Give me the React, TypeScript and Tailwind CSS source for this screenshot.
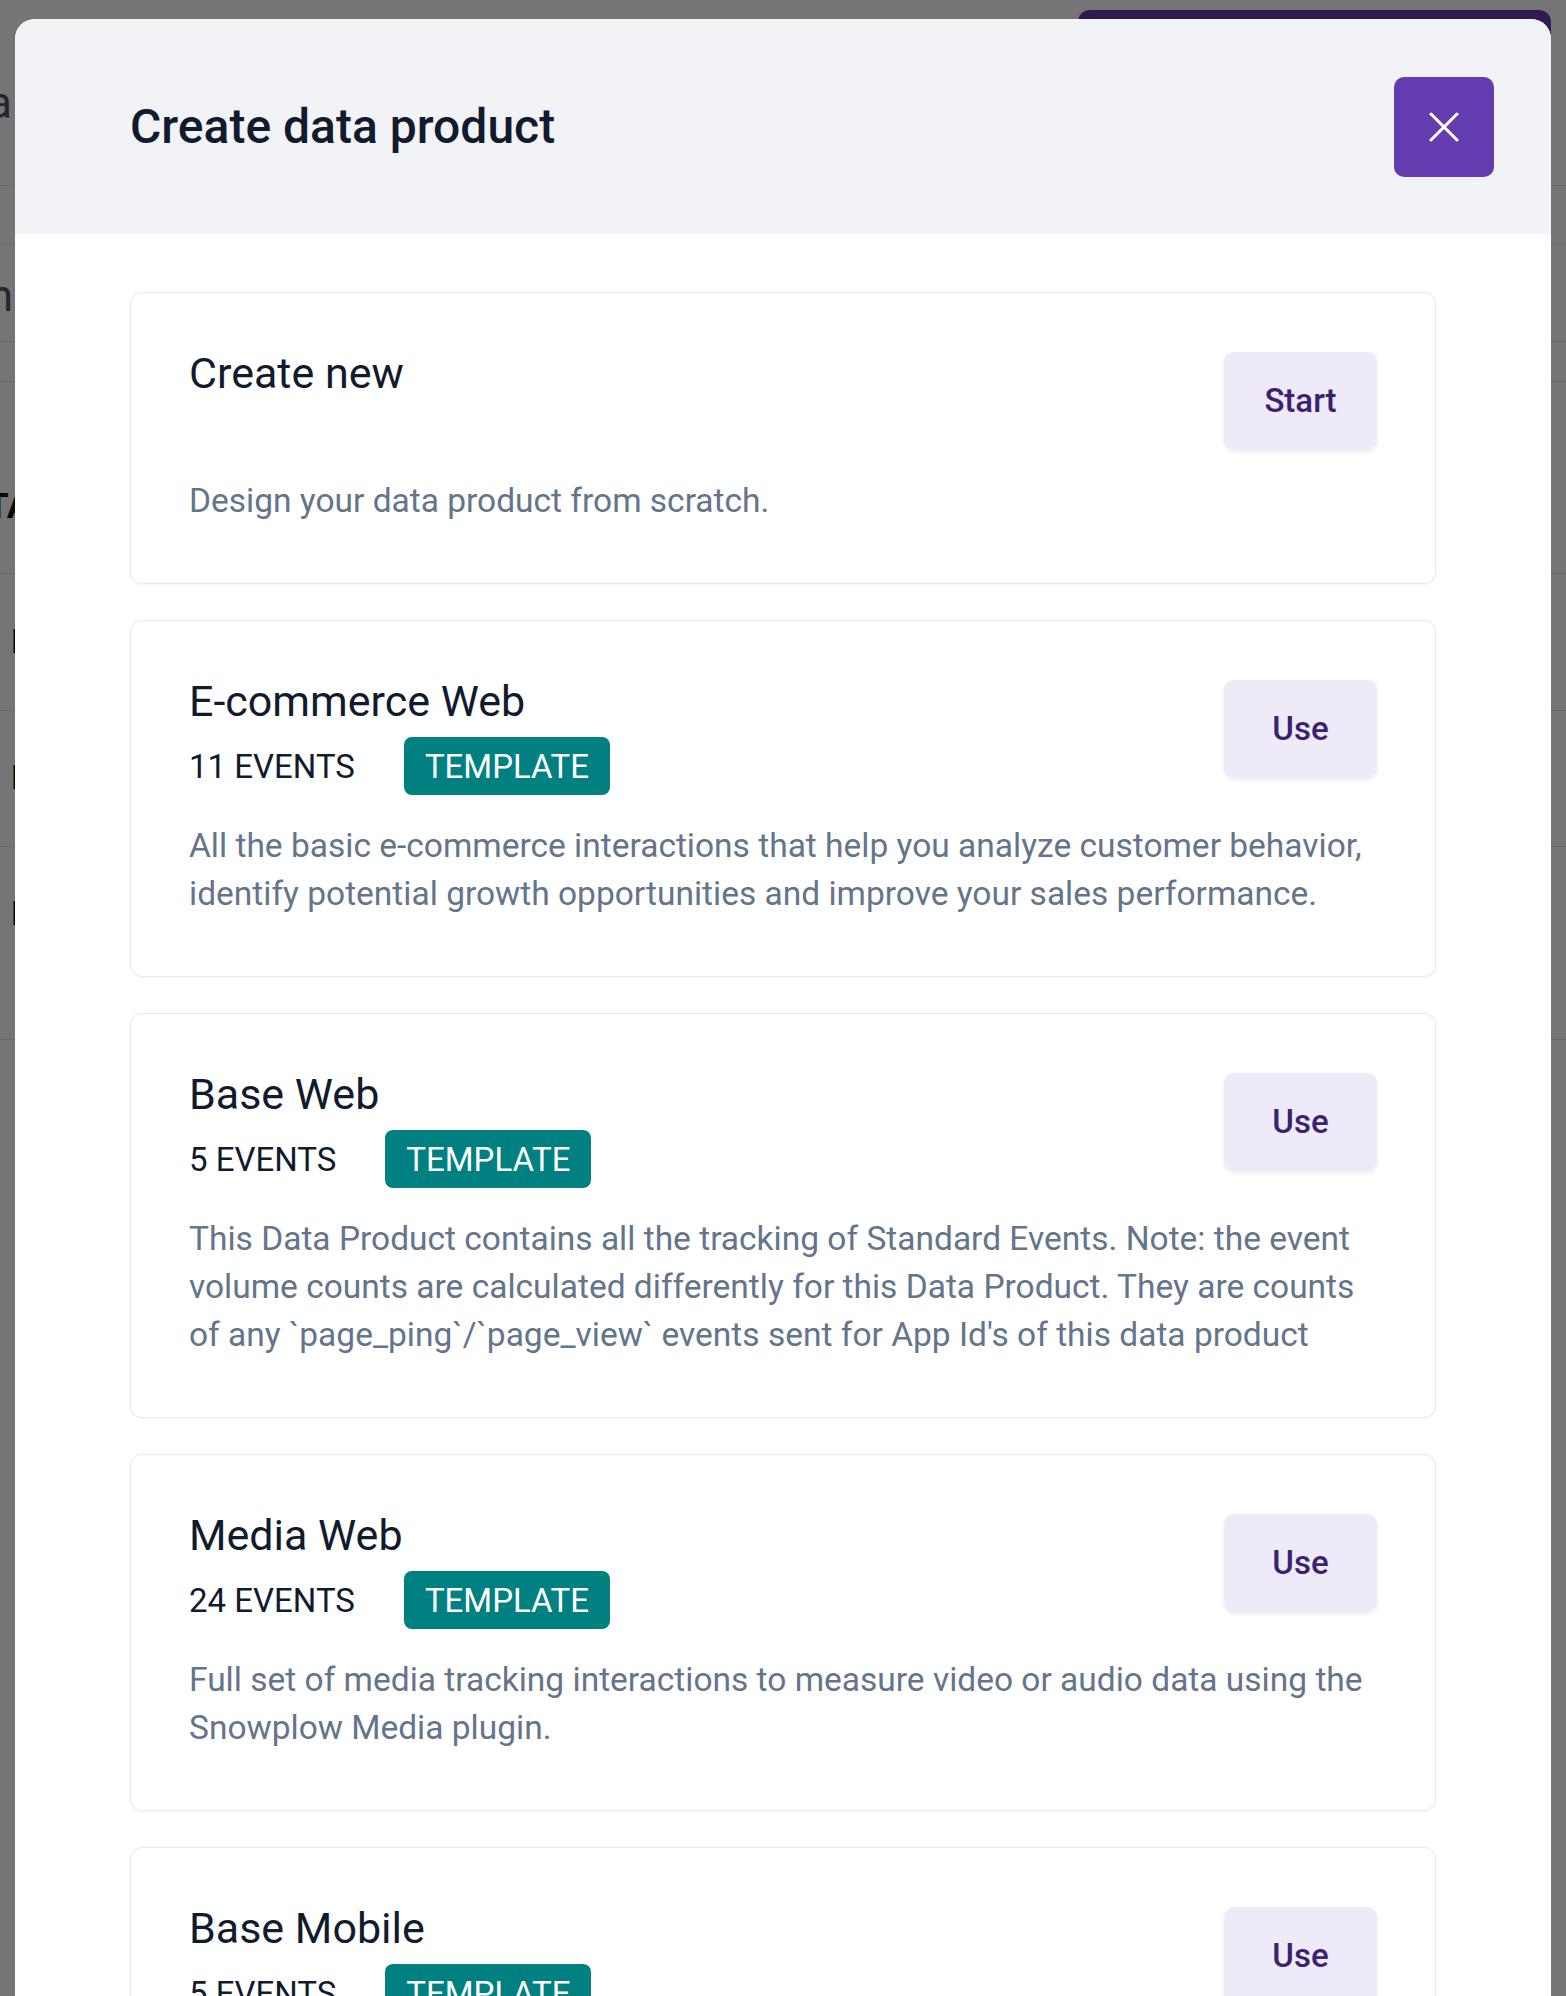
import React from "react";

type Item = {
  title: string;
  events?: string;
  button: string;
  description: string;
};

const items: Item[] = [
  { title: "Create new", button: "Start", description: "Design your data product from scratch." },
  {
    title: "E-commerce Web",
    events: "11 EVENTS",
    button: "Use",
    description:
      "All the basic e-commerce interactions that help you analyze customer behavior, identify potential growth opportunities and improve your sales performance.",
  },
  {
    title: "Base Web",
    events: "5 EVENTS",
    button: "Use",
    description:
      "This Data Product contains all the tracking of Standard Events. Note: the event volume counts are calculated differently for this Data Product. They are counts of any `page_ping`/`page_view` events sent for App Id's of this data product",
  },
  {
    title: "Media Web",
    events: "24 EVENTS",
    button: "Use",
    description:
      "Full set of media tracking interactions to measure video or audio data using the Snowplow Media plugin.",
  },
  {
    title: "Base Mobile",
    events: "5 EVENTS",
    button: "Use",
    description:
      "Tracking of the standard mobile events such as screen views, application lifecycle and errors for your mobile apps.",
  },
];

function Card({ item }: { item: Item }) {
  return (
    <div className="shrink-0 rounded-[12px] border border-[#e9eaee] bg-white px-[58px] pt-[59px] pb-[58px] shadow-[0_1px_3px_rgba(0,0,0,0.05)]">
      <div className="flex items-start justify-between">
        <div className="flex flex-col">
          <div className="text-[43px] leading-none text-[#111b2d]">{item.title}</div>
          {item.events && (
            <div className="mt-[14px] flex items-center gap-[49px]">
              <span className="text-[33px] leading-none text-[#111b2d]">{item.events}</span>
              <span className="flex h-[58px] items-center rounded-[8px] bg-[#008080] px-[21px] text-[33px] leading-none text-white">
                TEMPLATE
              </span>
            </div>
          )}
        </div>
        <button className="flex h-[98px] w-[153px] items-center justify-center rounded-[10px] bg-[#eeeaf8] text-[33px] font-medium text-[#3b2270] shadow-[0_2px_4px_rgba(0,0,0,0.08)]">
          {item.button}
        </button>
      </div>
      <p className="mt-[27px] text-[33.5px] leading-[48px] text-[#64748b]">{item.description}</p>
    </div>
  );
}

export default function App() {
  return (
    <div className="relative h-[1996px] w-full overflow-hidden bg-white font-[Roboto,sans-serif]">
      {/* Background page (behind the overlay) */}
      <div className="flex flex-col">
        <div className="flex h-[185px] justify-between">
          <div className="flex w-[15px] justify-end overflow-hidden pt-[81px] pr-[3px]">
            <span className="whitespace-nowrap text-[44px] leading-none text-[#4b5563]">Data</span>
          </div>
          <div className="pt-[10px] pr-[15px]">
            <div className="h-[80px] w-[473px] rounded-[12px] bg-[#643bb2]" />
          </div>
        </div>
        <div className="h-[59px] border-t border-[#e5e7eb]" />
        <div className="h-[97px] border-t border-[#e5e7eb] pt-[29px]">
          <div className="flex w-[15px] justify-end overflow-hidden pr-[2px]">
            <span className="whitespace-nowrap text-[44px] leading-none text-[#4b5563]">Design</span>
          </div>
        </div>
        <div className="h-[40px] border-t border-[#e5e7eb]" />
        <div className="h-[192px] border-t border-[#e5e7eb] pt-[107px]">
          <div className="w-[15px] overflow-hidden">
            <span className="-ml-[13px] block whitespace-nowrap text-[35px] font-bold leading-none text-[#111111]">
              TATUS
            </span>
          </div>
        </div>
        <div className="h-[137px] border-t border-[#e5e7eb] pt-[50px]">
          <div className="w-[15px] overflow-hidden pl-[11px]">
            <span className="block whitespace-nowrap text-[34px] font-medium leading-none text-[#111111]">D</span>
          </div>
        </div>
        <div className="h-[136px] border-t border-[#e5e7eb] pt-[49px]">
          <div className="w-[15px] overflow-hidden pl-[11px]">
            <span className="block whitespace-nowrap text-[34px] font-medium leading-none text-[#111111]">D</span>
          </div>
        </div>
        <div className="h-[193px] border-t border-[#e5e7eb] pt-[49px]">
          <div className="w-[15px] overflow-hidden pl-[11px]">
            <span className="block whitespace-nowrap text-[34px] font-medium leading-none text-[#111111]">D</span>
          </div>
        </div>
        <div className="h-[200px] border-t border-[#e5e7eb]" />
      </div>

      {/* Overlay */}
      <div className="absolute inset-0 bg-black/[0.54]" />

      {/* Modal */}
      <div className="absolute top-[19px] right-[15px] bottom-0 left-[15px] flex flex-col overflow-hidden rounded-t-[20px] bg-white">
        <div className="flex h-[215px] shrink-0 items-center justify-between bg-[#f2f3f7] pr-[57px] pl-[115px]">
          <h1 className="text-[48px] font-medium leading-none text-[#111b2d]">Create data product</h1>
          <button className="flex h-[100px] w-[100px] items-center justify-center rounded-[10px] bg-[#653cb0]">
            <svg width="30" height="30" viewBox="0 0 30 30" fill="none">
              <path d="M2 2L28 28M28 2L2 28" stroke="white" strokeWidth="3" strokeLinecap="round" />
            </svg>
          </button>
        </div>
        <div className="flex flex-col gap-[36px] px-[115px] pt-[58px]">
          {items.map((it) => (
            <Card key={it.title} item={it} />
          ))}
        </div>
      </div>
    </div>
  );
}
